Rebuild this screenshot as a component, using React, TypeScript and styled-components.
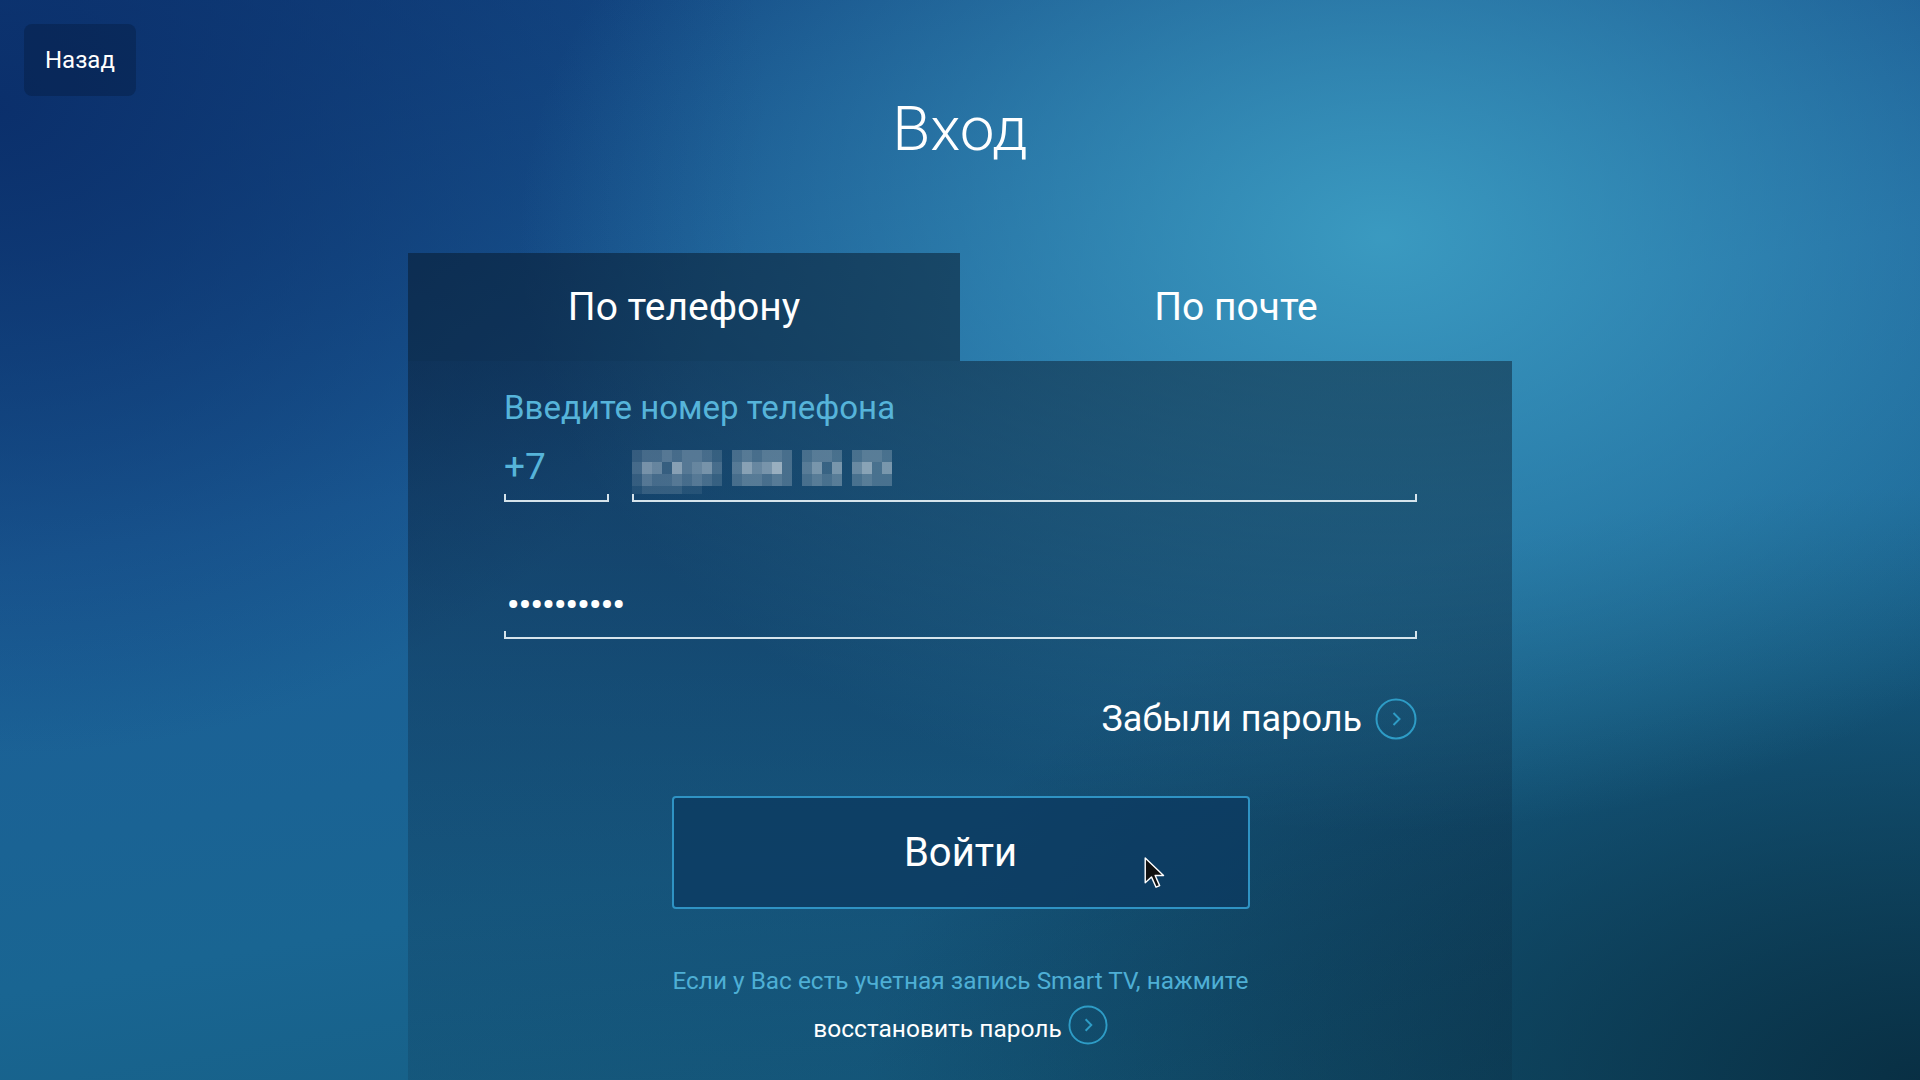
import React from 'react';
import styled, { createGlobalStyle } from 'styled-components';

const GlobalStyle = createGlobalStyle`
  html, body {
    margin: 0;
    padding: 0;
  }
  body {
    font-family: Roboto, 'Noto Sans', 'Liberation Sans', sans-serif;
    color: #ffffff;
  }
`;

const accent = '#56b4da';
const ring = '#2e9cc6';

const Page = styled.div`
  position: relative;
  width: 1920px;
  height: 1080px;
  overflow: hidden;
  display: flex;
  flex-direction: column;
  background:
    radial-gradient(ellipse 45% 55% at 72% 22%, rgba(64, 165, 200, 0.85) 0%, rgba(64, 165, 200, 0) 100%),
    radial-gradient(ellipse 55% 55% at 100% 100%, rgba(8, 45, 65, 0.95) 0%, rgba(8, 45, 65, 0) 100%),
    radial-gradient(ellipse 40% 60% at 0% 10%, rgba(10, 45, 105, 0.9) 0%, rgba(10, 45, 105, 0) 100%),
    linear-gradient(170deg, #11427e 0%, #1c5f98 40%, #196592 70%, #145c7c 100%);
`;

const Header = styled.header`
  display: grid;
  grid-template-columns: 1fr auto 1fr;
  align-items: start;
  padding: 24px 24px 0;
`;

const BackButton = styled.button`
  justify-self: start;
  height: 72px;
  padding: 0 21px;
  border: none;
  border-radius: 8px;
  background: rgba(4, 22, 50, 0.32);
  color: #ffffff;
  font-family: inherit;
  font-size: 24px;
`;

const Title = styled.h1`
  margin: 67px 0 0;
  font-size: 62px;
  font-weight: 300;
  line-height: 76px;
  text-align: center;
`;

const Card = styled.section`
  width: 1104px;
  margin: 86px auto 0;
  flex: 1;
  display: flex;
  flex-direction: column;
`;

const Tabs = styled.div`
  display: grid;
  grid-template-columns: 1fr 1fr;
  height: 108px;
`;

const Tab = styled.div<{ $active?: boolean }>`
  display: flex;
  align-items: center;
  justify-content: center;
  font-size: 39px;
  background: ${(p) => (p.$active ? 'rgba(8, 24, 42, 0.52)' : 'transparent')};
`;

const Body = styled.div`
  flex: 1;
  display: flex;
  flex-direction: column;
  padding: 27px 95px 0 96px;
  background: linear-gradient(
    to bottom,
    rgba(8, 24, 42, 0.48) 0%,
    rgba(8, 24, 42, 0.3) 45%,
    rgba(8, 24, 42, 0.14) 100%
  );
`;

const FieldLabel = styled.div`
  font-size: 33px;
  line-height: 40px;
  color: ${accent};
`;

const PhoneRow = styled.div`
  display: flex;
  gap: 23px;
`;

const Field = styled.div<{ $width?: number }>`
  position: relative;
  ${(p) => (p.$width ? `width: ${p.$width}px; flex: none;` : 'flex: 1;')}
  height: 44px;
  padding: 16px 0 12px;
  display: flex;
  align-items: center;
  border-bottom: 2px solid rgba(235, 245, 250, 0.9);

  &::before,
  &::after {
    content: '';
    position: absolute;
    bottom: 0;
    width: 2px;
    height: 6px;
    background: rgba(235, 245, 250, 0.9);
  }
  &::before {
    left: 0;
  }
  &::after {
    right: 0;
  }
`;

const PasswordField = styled(Field)`
  flex: none;
  margin-top: 80px;
  padding: 0 0 11px;
`;

const Prefix = styled.span`
  font-size: 37px;
  color: ${accent};
`;

const Dots = styled.span`
  font-size: 34px;
  font-weight: 700;
  letter-spacing: -0.5px;
  padding-left: 3px;
`;

const ForgotRow = styled.div`
  margin-top: 58px;
  display: flex;
  justify-content: flex-end;
  align-items: center;
  gap: 13px;
  font-size: 36px;
  line-height: 44px;
`;

const LoginButton = styled.button`
  position: relative;
  align-self: center;
  width: 578px;
  height: 113px;
  margin-top: 55px;
  border: 2px solid #2f93c4;
  border-radius: 4px;
  background: rgba(12, 58, 96, 0.78);
  color: #ffffff;
  font-family: inherit;
  font-size: 40px;
`;

const Cursor = styled.svg`
  position: absolute;
  left: 470px;
  top: 59px;
`;

const Hint = styled.p`
  margin: 56px 0 0;
  text-align: center;
  font-size: 24.4px;
  line-height: 32px;
  color: #4eafd5;
`;

const RestoreRow = styled.div`
  margin-top: 4px;
  display: flex;
  justify-content: center;
  align-items: center;
  gap: 6px;
  font-size: 24.5px;
  line-height: 40px;
`;

const RestoreText = styled.span`
  padding-top: 8px;
`;

const MosaicSvg = styled.svg`
  margin-top: 14px;
`;

const ArrowCircle = ({ size }: { size: number }) => (
  <svg width={size} height={size} viewBox="0 0 42 42">
    <circle cx="21" cy="21" r="19.5" fill="none" stroke={ring} strokeWidth="2" />
    <path d="M18.5 15 L24.5 21 L18.5 27" fill="none" stroke={ring} strokeWidth="2" />
  </svg>
);

// blurred phone number, drawn as a mosaic of pale cells
const mosaicRows = [
  '233434432.343443.3443.3443',
  '365274563.475683.4626.5736',
  '243343432.344343.3434.3433',
  '122221100.000000.0000.0000',
];

const Mosaic = () => (
  <MosaicSvg width="260" height="46" viewBox="0 0 260 46">
    {mosaicRows.map((row, r) =>
      row.split('').map((c, i) =>
        c === '.' || c === '0' ? null : (
          <rect
            key={`${r}-${i}`}
            x={i * 10}
            y={r * 12}
            width="10"
            height={r === 3 ? 8 : 12}
            fill="#ffffff"
            opacity={Number(c) * 0.07}
          />
        ),
      ),
    )}
  </MosaicSvg>
);

const App = () => (
  <Page>
    <GlobalStyle />
    <Header>
      <BackButton>Назад</BackButton>
      <Title>Вход</Title>
    </Header>
    <Card>
      <Tabs>
        <Tab $active>По телефону</Tab>
        <Tab>По почте</Tab>
      </Tabs>
      <Body>
        <FieldLabel>Введите номер телефона</FieldLabel>
        <PhoneRow>
          <Field $width={105}>
            <Prefix>+7</Prefix>
          </Field>
          <Field>
            <Mosaic />
          </Field>
        </PhoneRow>
        <PasswordField>
          <Dots>••••••••••</Dots>
        </PasswordField>
        <ForgotRow>
          Забыли пароль
          <ArrowCircle size={42} />
        </ForgotRow>
        <LoginButton>
          Войти
          <Cursor width="22" height="32" viewBox="0 0 12 18">
            <path
              d="M0.5 0.5 L0.5 14.5 L4 11.2 L6.6 17 L8.6 16.1 L6.1 10.4 L10.8 10.4 Z"
              fill="#111111"
              stroke="#ffffff"
              strokeWidth="0.8"
              strokeLinejoin="round"
            />
          </Cursor>
        </LoginButton>
        <Hint>Если у Вас есть учетная запись Smart TV, нажмите</Hint>
        <RestoreRow>
          <RestoreText>восстановить пароль</RestoreText>
          <ArrowCircle size={40} />
        </RestoreRow>
      </Body>
    </Card>
  </Page>
);

export default App;
